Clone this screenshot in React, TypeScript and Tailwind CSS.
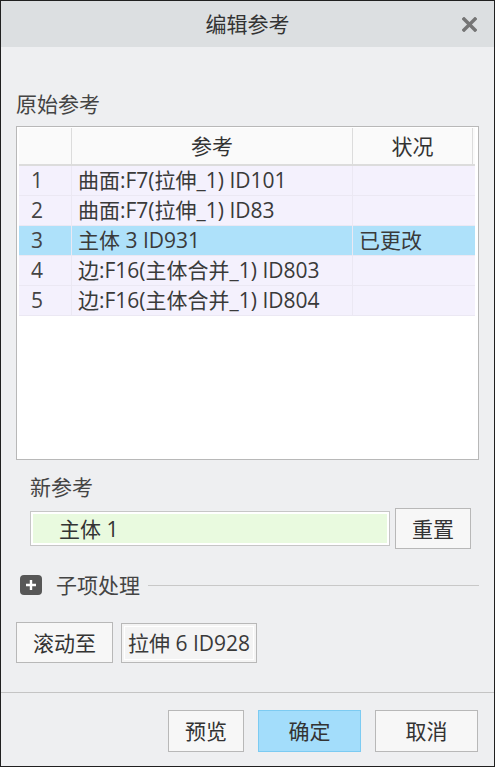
import React from 'react';

// Rows of the original reference table
interface RefRow {
  no: number;
  name: string;
  status: string;
}

const rows: RefRow[] = [
  { no: 1, name: '曲面:F7(拉伸_1) ID101', status: '' },
  { no: 2, name: '曲面:F7(拉伸_1) ID83', status: '' },
  { no: 3, name: '主体 3 ID931', status: '已更改' },
  { no: 4, name: '边:F16(主体合并_1) ID803', status: '' },
  { no: 5, name: '边:F16(主体合并_1) ID804', status: '' },
];

const font = { fontFamily: '"Open Sans", "Noto Sans CJK SC", sans-serif' };

const App: React.FC = () => {
  const selected = 3;

  return (
    <div
      className="w-[495px] h-[767px] flex flex-col border border-[#202020] bg-[#eeeff1] text-[21px] leading-[24px] text-[#3a3a3a] overflow-hidden"
      style={font}
    >
      {/* Title bar */}
      <div className="h-[46px] shrink-0 grid grid-cols-[1fr_auto_1fr] items-center bg-[#dcdfe1]">
        <div />
        <div className="text-[21px] text-[#333]">编辑参考</div>
        <div className="flex justify-end pr-[17px]">
          <svg width="15" height="15" viewBox="0 0 15 15">
            <path d="M2 2 L13 13 M13 2 L2 13" stroke="#757575" strokeWidth="3.4" strokeLinecap="square" />
          </svg>
        </div>
      </div>

      {/* Body */}
      <div className="flex-1 flex flex-col px-[15px]">
        <div className="mt-[45px] text-[#444]">原始参考</div>

        {/* Reference table */}
        <div className="mt-[10px] h-[334px] border border-[#b8b8b8] bg-white pt-[1px] pl-[2px] pr-[3px]">
          <div className="grid grid-cols-[53px_281px_120px] h-[38px] bg-[#fafafa] border-b-2 border-[#dcdcdc]">
            <div className="border-r border-[#dcdcdc]" />
            <div className="flex items-center justify-center border-r border-[#dcdcdc] text-[#333]">参考</div>
            <div className="flex items-center justify-center border-r border-[#dcdcdc] text-[#333]">状况</div>
          </div>
          {rows.map((r) => {
            const sel = r.no === selected;
            return (
              <div
                key={r.no}
                className={`grid grid-cols-[53px_281px_120px] h-[30px] border-b border-[#ebe8f3] ${
                  sel ? 'bg-[#aee1fa]' : 'bg-[#f4f1fd]'
                }`}
              >
                <div className="flex items-center pl-[12px] pb-[2px] border-r border-[#ebe8f3] text-[#444]">{r.no}</div>
                <div className="flex items-center pl-[6px] pb-[2px] border-r border-[#ebe8f3] whitespace-nowrap text-[#3a3a3a]">
                  {r.name}
                </div>
                <div className="flex items-center pl-[6px] pb-[2px] text-[#3a3a3a]">{r.status}</div>
              </div>
            );
          })}
        </div>

        {/* New reference */}
        <div className="mt-[15px] pl-[14px] text-[#444]">新参考</div>
        <div className="mt-[9px] flex items-center gap-[5px] pl-[14px]">
          <div className="w-[360px] h-[35px] border border-[#c6c6c6] p-[2px] bg-white">
            <div className="h-full bg-[#e9fadf] flex items-center pl-[26px] text-[#333]">主体 1</div>
          </div>
          <button className="w-[76px] h-[41px] border border-[#b8b8b8] bg-[#f7f7f7] text-[#333]">重置</button>
        </div>

        {/* Child handling */}
        <div className="mt-[25px] flex items-center h-[22px]">
          <div className="ml-[4px] w-[22px] h-[20px] rounded-[4px] bg-[#575757] flex items-center justify-center">
            <svg width="12" height="12" viewBox="0 0 12 12">
              <path d="M6 1 V11 M1 6 H11" stroke="#fff" strokeWidth="2.4" />
            </svg>
          </div>
          <span className="ml-[14px] text-[#444]">子项处理</span>
          <div className="flex-1 ml-[8px] h-px bg-[#c8c8c8]" />
        </div>

        <div className="mt-[26px] flex items-center gap-[8px]">
          <button className="w-[97px] h-[41px] border border-[#b8b8b8] bg-[#f7f7f7] text-[#333]">滚动至</button>
          <button className="w-[136px] h-[40px] border border-[#b8b8b8] bg-[#f4f4f4] p-[2px]">
            <div className="h-full border border-white flex items-center justify-center text-[#3a3a3a] whitespace-nowrap">
              拉伸 6 ID928
            </div>
          </button>
        </div>
      </div>

      {/* Footer */}
      <div className="h-[74px] shrink-0 border-t border-[#c4c4c4] flex items-start justify-end gap-[14px] pt-[17px] pr-[16px]">
        <button className="w-[76px] h-[42px] border border-[#b8b8b8] bg-[#f7f7f7] text-[#333]">预览</button>
        <button className="w-[103px] h-[42px] border border-[#7ccbf2] bg-[#a3ddfb] text-[#333]">确定</button>
        <button className="w-[103px] h-[42px] border border-[#b8b8b8] bg-[#f7f7f7] text-[#333]">取消</button>
      </div>
    </div>
  );
};

export default App;
